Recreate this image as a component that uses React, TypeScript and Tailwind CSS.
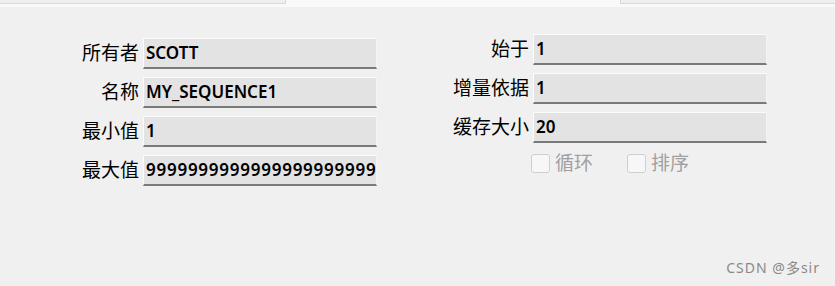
import React from 'react';

const font = { fontFamily: '"Noto Sans", "Noto Sans CJK SC", sans-serif' };

function Field({ label, value, wide }: { label: string; value: string; wide?: boolean }) {
  return (
    <div className="flex h-[31px] items-center">
      <span className="w-[80px] pr-[4px] text-right text-[19px] leading-none text-black">{label}</span>
      <div
        className={`flex h-[31px] w-[234px] items-center overflow-hidden whitespace-nowrap border-t border-l border-t-[#fbfbfb] border-l-[#fbfbfb] border-r border-r-[#f4f4f4] border-b-2 border-b-[#7a7a7a] bg-[#e3e3e3] pl-[2px] text-[17px] font-semibold text-black ${
          wide ? 'tracking-[0.75px]' : ''
        }`}
      >
        {value}
      </div>
    </div>
  );
}

function Check({ label }: { label: string }) {
  return (
    <label className="flex items-center gap-[5px] text-[19px] leading-none text-[#a0a0a0]">
      <span className="h-[19px] w-[19px] rounded-[3px] border border-[#cfcfcf] bg-[#f7f7f7]" />
      {label}
    </label>
  );
}

export default function App() {
  return (
    <div className="relative h-[286px] w-[835px] overflow-hidden bg-[#f0f0f0]" style={font}>
      <div className="flex h-[7px] bg-[#f9f9f9]">
        <div className="h-[4px] w-[286px] border-r border-b border-[#dadada] bg-[#efefef]" />
        <div className="flex-1" />
        <div className="h-[4px] w-[215px] border-l border-b border-[#dadada] bg-[#efefef]" />
      </div>

      <div className="flex pl-[63px]">
        <div className="mt-[31px] flex flex-col gap-[8px]">
          <Field label="所有者" value="SCOTT" />
          <Field label="名称" value="MY_SEQUENCE1" />
          <Field label="最小值" value="1" />
          <Field label="最大值" value="9999999999999999999999" wide />
        </div>
        <div className="ml-[76px] mt-[27px] flex flex-col gap-[8px]">
          <Field label="始于" value="1" />
          <Field label="增量依据" value="1" />
          <Field label="缓存大小" value="20" />
          <div className="flex h-[24px] items-center gap-[34px] pl-[78px]">
            <Check label="循环" />
            <Check label="排序" />
          </div>
        </div>
      </div>

      <span className="absolute right-[15px] bottom-[8px] text-[14px] tracking-[1px] text-[#8a8a8a]">CSDN @多sir</span>
    </div>
  );
}
